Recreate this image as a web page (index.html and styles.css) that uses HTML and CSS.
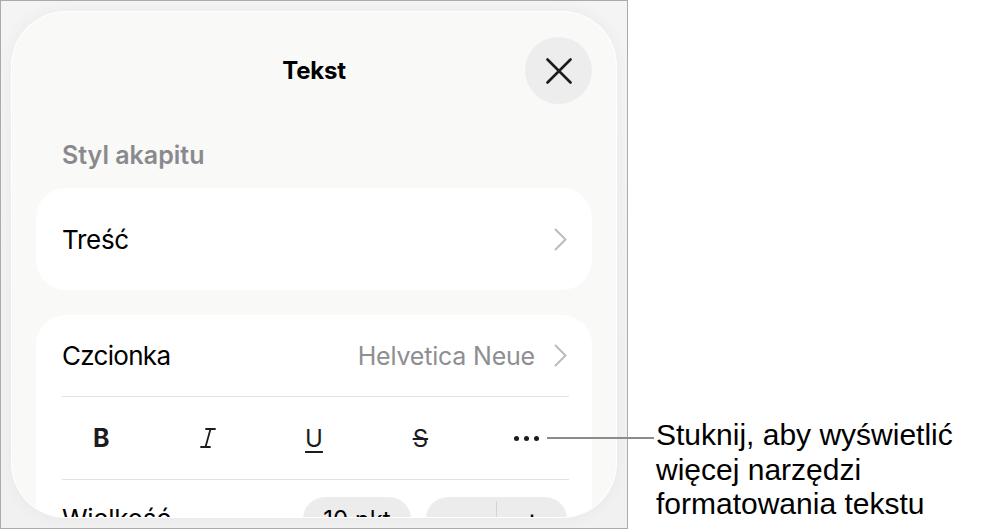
FILE: index.html
```html
<!DOCTYPE html>
<html lang="pl">
<head>
<meta charset="utf-8">
<title>Tekst</title>
<link rel="stylesheet" href="styles.css">
</head>
<body>
<div class="page">
  <div class="frame">
    <div class="sheet">
      <header class="sheet-header">
        <span class="spacer"></span>
        <h1 class="title">Tekst</h1>
        <button class="close" aria-label="Zamknij">
          <svg width="26" height="26" viewBox="0 0 26 26"><path d="M1.5 1.5 L24.5 24.5 M24.5 1.5 L1.5 24.5" stroke="#1c1c1e" stroke-width="2.6" stroke-linecap="round" fill="none"/></svg>
        </button>
      </header>

      <div class="section-label">Styl akapitu</div>

      <div class="card">
        <div class="row row-style">
          <span class="label">Treść</span>
          <svg class="chev" width="13" height="23" viewBox="0 0 13 23"><path d="M1.5 1.5 L11.5 11.5 L1.5 21.5" stroke="#bcbcc0" stroke-width="2" fill="none" stroke-linecap="round" stroke-linejoin="round"/></svg>
        </div>
      </div>

      <div class="card card-font">
        <div class="row row-font">
          <span class="label">Czcionka</span>
          <span class="value">Helvetica Neue</span>
          <svg class="chev" width="13" height="23" viewBox="0 0 13 23"><path d="M1.5 1.5 L11.5 11.5 L1.5 21.5" stroke="#bcbcc0" stroke-width="2" fill="none" stroke-linecap="round" stroke-linejoin="round"/></svg>
        </div>
        <div class="divider"></div>
        <div class="format-row">
          <span class="fmt fmt-b">B</span>
          <span class="fmt fmt-i">
            <svg width="16" height="20" viewBox="0 0 16 20"><path d="M6 1 H15 M1 19 H10 M10.5 1 L5.5 19" stroke="#1c1c1e" stroke-width="1.8" fill="none" stroke-linecap="round"/></svg>
          </span>
          <span class="fmt fmt-u">U</span>
          <span class="fmt fmt-s">S</span>
          <span class="fmt fmt-more"><i class="dot"></i><i class="dot"></i><i class="dot"></i></span>
        </div>
        <div class="divider"></div>
        <div class="row row-size">
          <span class="label">Wielkość</span>
          <div class="size-controls">
            <span class="pill pill-value">10 pkt</span>
            <span class="pill pill-stepper"><span class="step">−</span><span class="step-sep"></span><span class="step">+</span></span>
          </div>
        </div>
      </div>
    </div>
  </div>

  <div class="callout">
    <span class="callout-line"></span>
    <p class="callout-text">Stuknij, aby wyświetlić<br>więcej narzędzi<br>formatowania tekstu</p>
  </div>
</div>
</body>
</html>
```

FILE: styles.css
```css
* { box-sizing: border-box; }
html, body { margin: 0; padding: 0; background: #ffffff; }
body { font-family: "Inter", "Noto Sans", sans-serif; color: #000; }

.page { position: relative; width: 982px; height: 532px; }

.frame {
  width: 628px;
  height: 529px;
  border: 1px solid #ababab;
  padding: 11px 11px 10px 11px;
  background: linear-gradient(180deg, #f4f4f4 0%, #f1f1f1 100%);
  overflow: hidden;
}

.sheet {
  height: 505px;
  background: #f9f9f8;
  border-radius: 54px;
  box-shadow: 0 0 0 1px #ffffff, 0 0 18px rgba(0,0,0,0.05);
  padding: 25px 24px 0 24px;
  overflow: hidden;
  display: flex;
  flex-direction: column;
}

.sheet-header {
  display: grid;
  grid-template-columns: 67px 1fr 67px;
  align-items: center;
  height: 67px;
  flex: none;
}
.title {
  margin: 0;
  text-align: center;
  font-size: 24px;
  font-weight: 700;
  letter-spacing: -0.2px;
  line-height: 30px;
}
.close {
  width: 67px; height: 67px;
  border: none;
  border-radius: 50%;
  background: #ededed;
  padding: 0;
  display: flex; align-items: center; justify-content: center;
}

.section-label {
  margin: 37px 0 0 26px;
  font-size: 25px;
  line-height: 28px;
  font-weight: 600;
  color: #8a8a8e;
  flex: none;
}

.card {
  background: #ffffff;
  border-radius: 30px;
  flex: none;
}
.card + .card { margin-top: 25px; }
.section-label + .card { margin-top: 19px; }

.row {
  display: flex;
  align-items: center;
  padding: 0 25px 0 26px;
}
.row-style { height: 102px; }
.row-font { height: 81px; }
.label { font-size: 26px; letter-spacing: -0.3px; flex: 1; }
.row-font .label { letter-spacing: -0.7px; }
.value { font-size: 25px; color: #8e8e93; margin-right: 19px; letter-spacing: -0.2px; }
.chev { flex: none; }

.divider { height: 1px; background: #e2e2e4; margin: 0 23px 0 26px; }

.format-row {
  height: 82px;
  display: grid;
  grid-template-columns: repeat(5, 1fr);
  align-items: center;
  justify-items: center;
  padding: 0 12px;
}
.fmt { display: flex; align-items: center; justify-content: center; color: #1c1c1e; }
.fmt-b { font-size: 25px; font-weight: 700; }
.fmt-u { font-size: 24px; text-decoration: underline; text-decoration-thickness: 2px; text-underline-offset: 4px; }
.fmt-s { font-size: 24px; text-decoration: line-through; text-decoration-thickness: 2px; }
.fmt-more { gap: 5px; }
.dot { display: block; width: 5px; height: 5px; border-radius: 50%; background: #1c1c1e; }

.row-size { padding-top: 17px; align-items: flex-start; padding-right: 25px; }
.row-size .label { padding-top: 6px; }
.size-controls { display: flex; gap: 15px; }
.pill {
  height: 44px;
  border-radius: 22px;
  background: #ececec;
  display: flex; align-items: center; justify-content: center;
  font-size: 24px;
}
.pill-value { width: 108px; }
.pill-stepper { width: 141px; }
.step { flex: 1; text-align: center; font-size: 28px; }
.step-sep { width: 1px; align-self: stretch; margin: 4px 0; background: #d4d4d4; }

.callout { position: absolute; left: 0; top: 0; }
.callout-line {
  position: absolute;
  left: 547px; top: 437px;
  width: 107px; height: 2px;
  background: #8c8c8c;
}
.callout-text {
  position: absolute;
  left: 656px; top: 418px;
  margin: 0;
  width: 330px;
  font-family: "Liberation Sans", Arial, sans-serif;
  font-size: 30px;
  line-height: 34.5px;
  color: #000;
  white-space: nowrap;
}
```
